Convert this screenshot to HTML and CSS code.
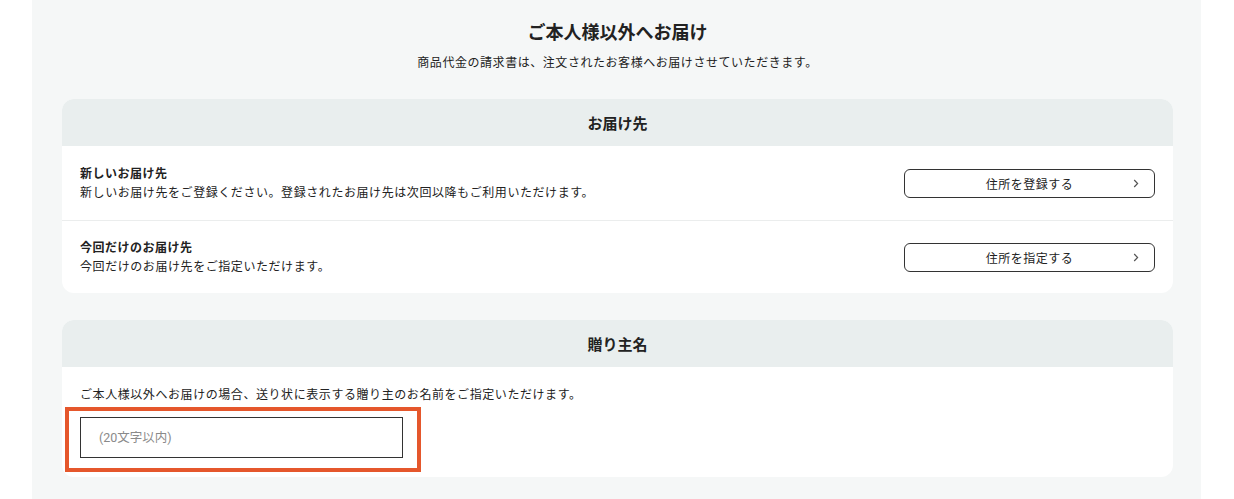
FILE: index.html
```html
<!DOCTYPE html>
<html lang="ja">
<head>
<meta charset="utf-8">
<title>ご本人様以外へお届け</title>
<link rel="stylesheet" href="styles.css">
</head>
<body>
<div class="panel">
  <h1 class="page-title">ご本人様以外へお届け</h1>
  <p class="page-sub">商品代金の請求書は、注文されたお客様へお届けさせていただきます。</p>

  <section class="card">
    <h2 class="card-head">お届け先</h2>
    <div class="row row-first">
      <div class="row-text">
        <div class="row-title">新しいお届け先</div>
        <div class="row-desc">新しいお届け先をご登録ください。登録されたお届け先は次回以降もご利用いただけます。</div>
      </div>
      <button class="btn" type="button">住所を登録する
        <svg class="chev" width="6" height="9" viewBox="0 0 6 9"><polyline points="1.2,1 4.6,4.5 1.2,8" fill="none" stroke="#555" stroke-width="1.2"/></svg>
      </button>
    </div>
    <div class="row row-second">
      <div class="row-text">
        <div class="row-title">今回だけのお届け先</div>
        <div class="row-desc">今回だけのお届け先をご指定いただけます。</div>
      </div>
      <button class="btn" type="button">住所を指定する
        <svg class="chev" width="6" height="9" viewBox="0 0 6 9"><polyline points="1.2,1 4.6,4.5 1.2,8" fill="none" stroke="#555" stroke-width="1.2"/></svg>
      </button>
    </div>
  </section>

  <section class="card card-sender">
    <h2 class="card-head">贈り主名</h2>
    <div class="sender-body">
      <p class="sender-desc">ご本人様以外へお届けの場合、送り状に表示する贈り主のお名前をご指定いただけます。</p>
      <div class="field">
        <input class="name-input" type="text" placeholder="(20文字以内)">
        <div class="highlight"></div>
      </div>
    </div>
  </section>
</div>
</body>
</html>
```

FILE: styles.css
```css
* { box-sizing: border-box; }
html, body { margin: 0; padding: 0; background: #ffffff; }
body {
  font-family: "Noto Sans CJK JP", "Noto Sans", sans-serif;
  color: #222222;
}
.panel {
  width: 1169px;
  margin-left: 32px;
  min-height: 499px;
  background: #f5f7f7;
  padding: 18px 28px 0 30px;
}
.page-title {
  margin: 0;
  font-size: 18px;
  line-height: 26px;
  font-weight: 700;
  text-align: center;
}
.page-sub {
  margin: 9px 0 0;
  font-size: 12px;
  letter-spacing: 0.55px;
  line-height: 18px;
  text-align: center;
}
.card {
  background: #ffffff;
  border-radius: 12px;
  overflow: hidden;
  margin-top: 28px;
}
.card-sender { margin-top: 27px; }
.card-head {
  margin: 0;
  height: 47px;
  line-height: 47px;
  background: #e9eeee;
  font-size: 15px;
  font-weight: 700;
  text-align: center;
}
.row {
  display: flex;
  align-items: center;
  justify-content: space-between;
  padding: 0 18px 0 18px;
}
.row-first { height: 75px; border-bottom: 1px solid #ebeded; padding-bottom: 2px; }
.row-second { height: 72px; padding-bottom: 2px; }
.row-title {
  font-size: 12px;
  letter-spacing: 0.5px;
  font-weight: 700;
  line-height: 18px;
}
.row-desc {
  font-size: 12px;
  letter-spacing: 0.57px;
  line-height: 19px;
}
.btn {
  position: relative;
  width: 251px;
  height: 29px;
  border: 1px solid #333333;
  border-radius: 6px;
  background: #ffffff;
  font-family: "Noto Sans CJK JP", "Noto Sans", sans-serif;
  font-size: 12px;
  letter-spacing: 0.5px;
  color: #222222;
  padding: 0;
  margin-top: 2px;
}
.chev {
  position: absolute;
  right: 15px;
  top: 9px;
}
.sender-body {
  padding: 18px 18px 19px;
}
.sender-desc {
  margin: 0 0 14px;
  font-size: 12px;
  letter-spacing: 0.57px;
  line-height: 18px;
}
.field {
  position: relative;
  width: 323px;
}
.name-input {
  display: block;
  width: 323px;
  height: 41px;
  border: 1px solid #333333;
  border-radius: 0;
  padding: 0 18px;
  font-family: Roboto, "Noto Sans CJK JP", sans-serif;
  font-size: 12.5px;
  color: #222222;
  background: #ffffff;
  outline: none;
}
.name-input::placeholder { color: #8a8a8a; }
.highlight {
  position: absolute;
  left: -15px;
  top: -10px;
  width: 356px;
  height: 65px;
  border: 4px solid #e5572c;
  pointer-events: none;
}
```
